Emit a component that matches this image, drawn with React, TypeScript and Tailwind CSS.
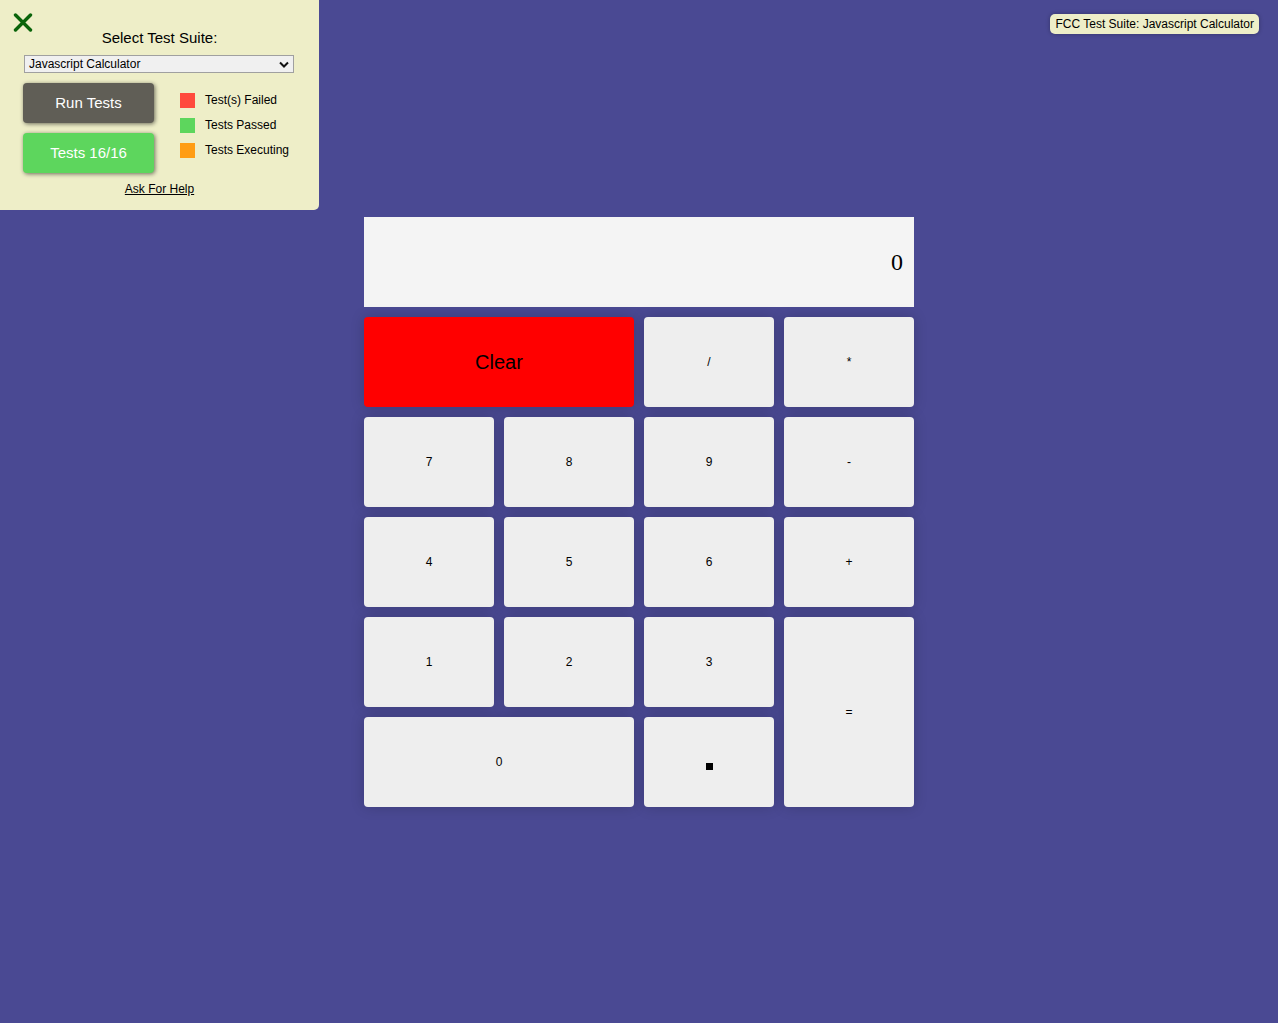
import React from "react";

const btn =
  "flex items-center justify-center rounded-[4px] bg-[#eeeeee] text-[12px] text-black shadow-[0_0_14px_rgba(0,0,0,0.18)]";

export default function App() {
  return (
    <div
      className="relative min-h-[1023px] w-full bg-[#4a4993]"
      style={{ fontFamily: '"Liberation Sans", Arial, sans-serif' }}
    >
      {/* Test panel */}
      <div className="absolute left-0 top-0 flex h-[210px] w-[319px] flex-col rounded-br-[5px] bg-[#eeeec8]">
        <div className="relative h-[55px]">
          <svg
            className="absolute left-[13px] top-[13px]"
            width="20"
            height="19"
            viewBox="0 0 20 19"
          >
            <path
              d="M2.5 2 L17.5 17 M17.5 2 L2.5 17"
              stroke="#0a640a"
              strokeWidth="3.4"
              strokeLinecap="round"
            />
          </svg>
          <div className="absolute left-0 right-0 top-[29px] text-center text-[15px] leading-[17px] text-black">
            Select Test Suite:
          </div>
        </div>
        <div className="ml-[24px] flex h-[18px] w-[270px] items-center justify-between border border-[#a0a0a0] bg-[#f0f0f0] pl-[4px] pr-[4px] text-[12px] text-black">
          <span>Javascript Calculator</span>
          <svg width="10" height="7" viewBox="0 0 10 7">
            <path d="M1 1.5 L5 5.5 L9 1.5" stroke="#111" strokeWidth="2" fill="none" />
          </svg>
        </div>
        <div className="mt-[10px] flex">
          <div className="ml-[23px] flex flex-col gap-[10px]">
            <div className="flex h-[40px] w-[131px] items-center justify-center rounded-[4px] bg-[#605e56] text-[15px] text-white shadow-[1px_1px_4px_rgba(0,0,0,0.55)]">
              Run Tests
            </div>
            <div className="flex h-[40px] w-[131px] items-center justify-center rounded-[4px] bg-[#5dd65d] text-[15px] text-white shadow-[1px_1px_4px_rgba(0,0,0,0.55)]">
              Tests 16/16
            </div>
          </div>
          <div className="ml-[26px] mt-[10px] flex flex-col gap-[10px] text-[12px] text-black">
            <div className="flex h-[15px] items-center">
              <span className="h-[15px] w-[15px] bg-[#ff4a3d]" />
              <span className="ml-[10px] -translate-y-[1px]">Test(s) Failed</span>
            </div>
            <div className="flex h-[15px] items-center">
              <span className="h-[15px] w-[15px] bg-[#5dd65d]" />
              <span className="ml-[10px] -translate-y-[1px]">Tests Passed</span>
            </div>
            <div className="flex h-[15px] items-center">
              <span className="h-[15px] w-[15px] bg-[#ff9d14]" />
              <span className="ml-[10px] -translate-y-[1px]">Tests Executing</span>
            </div>
          </div>
        </div>
        <div className="mt-[7px] text-center text-[12px] text-black underline">Ask For Help</div>
      </div>

      {/* badge */}
      <div className="absolute right-[19px] top-[14px] flex h-[20px] items-center rounded-[5px] bg-[#eeeec8] px-[5px] text-[12px] text-black shadow-[0_0_4px_rgba(0,0,0,0.3)]">
        FCC Test Suite: Javascript Calculator
      </div>

      {/* calculator */}
      <div className="flex justify-center pt-[217px]">
        <div className="w-[550px]">
          <div
            className="flex h-[90px] items-center justify-end bg-[#f4f4f4] pr-[11px] text-[24px] text-black"
            style={{ fontFamily: '"Liberation Serif", "Times New Roman", serif' }}
          >
            0
          </div>
          <div className="mt-[10px] grid grid-cols-[130px_130px_130px_130px] grid-rows-[90px_90px_90px_90px_90px] gap-[10px]">
            <div className="col-span-2 flex items-center justify-center rounded-[4px] bg-[#ff0000] text-[20px] text-black shadow-[0_0_14px_rgba(0,0,0,0.18)]">
              Clear
            </div>
            <div className={btn}>/</div>
            <div className={btn}>*</div>
            <div className={btn}>7</div>
            <div className={btn}>8</div>
            <div className={btn}>9</div>
            <div className={btn}>-</div>
            <div className={btn}>4</div>
            <div className={btn}>5</div>
            <div className={btn}>6</div>
            <div className={btn}>+</div>
            <div className={btn}>1</div>
            <div className={btn}>2</div>
            <div className={btn}>3</div>
            <div className={btn + " row-span-2"}>=</div>
            <div className={btn + " col-span-2"}>0</div>
            <div className={btn}>
              <span className="inline-block h-[7px] w-[7px] translate-y-[4px] bg-black" aria-label="." />
            </div>
          </div>
        </div>
      </div>
    </div>
  );
}
